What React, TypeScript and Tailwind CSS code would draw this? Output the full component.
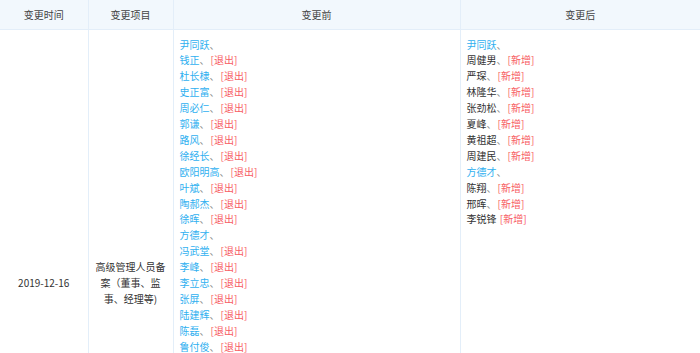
const BEFORE: { name: string; tag?: string }[] = [
  { name: "尹同跃" },
  { name: "钱正", tag: "退出" },
  { name: "杜长棣", tag: "退出" },
  { name: "史正富", tag: "退出" },
  { name: "周必仁", tag: "退出" },
  { name: "郭谦", tag: "退出" },
  { name: "路风", tag: "退出" },
  { name: "徐经长", tag: "退出" },
  { name: "欧阳明高", tag: "退出" },
  { name: "叶斌", tag: "退出" },
  { name: "陶郝杰", tag: "退出" },
  { name: "徐晖", tag: "退出" },
  { name: "方德才" },
  { name: "冯武堂", tag: "退出" },
  { name: "李峰", tag: "退出" },
  { name: "李立忠", tag: "退出" },
  { name: "张屏", tag: "退出" },
  { name: "陆建辉", tag: "退出" },
  { name: "陈磊", tag: "退出" },
  { name: "鲁付俊", tag: "退出" },
  { name: "高新华", tag: "退出" },
  { name: "王文胜", tag: "退出" },
  { name: "胡卫兵", tag: "退出" },
  { name: "杨辉", tag: "退出" },
  { name: "汪强", tag: "退出" },
  { name: "吴春", tag: "退出" },
  { name: "张林", tag: "退出" },
  { name: "刘明", tag: "退出" },
  { name: "孙勇", tag: "退出" },
  { name: "赵军", tag: "退出" },
  { name: "朱玲", tag: "退出" },
];

const AFTER: { name: string; link?: boolean; tag?: string }[] = [
  { name: "尹同跃", link: true },
  { name: "周健男", tag: "新增" },
  { name: "严琛", tag: "新增" },
  { name: "林隆华", tag: "新增" },
  { name: "张劲松", tag: "新增" },
  { name: "夏峰", tag: "新增" },
  { name: "黄祖超", tag: "新增" },
  { name: "周建民", tag: "新增" },
  { name: "方德才", link: true },
  { name: "陈翔", tag: "新增" },
  { name: "邢晖", tag: "新增" },
  { name: "李锐锋", tag: "新增" },
];

const font = { fontFamily: '"Noto Sans CJK SC", "Liberation Sans", sans-serif' };

export default function App() {
  return (
    <div className="h-[353px] w-[700px] overflow-hidden bg-white text-[10px] leading-[15.9px] text-[#333]" style={font}>
      <table className="w-[700px] table-fixed border-collapse">
        <colgroup>
          <col className="w-[88px]" />
          <col className="w-[85px]" />
          <col className="w-[287px]" />
          <col className="w-[240px]" />
        </colgroup>
        <thead>
          <tr className="h-[29px] bg-[#f2f8fd] text-[#444]">
            <th className="border-b border-r border-[#e3eef9] pt-px font-normal">变更时间</th>
            <th className="border-b border-r border-[#e3eef9] pt-px font-normal">变更项目</th>
            <th className="border-b border-r border-[#e3eef9] pt-px font-normal">变更前</th>
            <th className="border-b border-[#e3eef9] pt-px font-normal">变更后</th>
          </tr>
        </thead>
        <tbody>
          <tr>
            <td className="border-r border-[#e3eef9] px-1.5 text-center align-middle">2019-12-16</td>
            <td className="border-r border-[#e3eef9] px-1 text-center align-middle">
              高级管理人员备案（董事、监事、经理等)
            </td>
            <td className="border-r border-[#e3eef9] px-1.5 py-[7px] align-top">
              {BEFORE.map((b) => (
                <div key={b.name}>
                  <span className="text-[#2fb0f0]">{b.name}</span>
                  <span className="text-[#888]">、</span>
                  {b.tag && <span className="ml-px text-[#f75c63]">[{b.tag}]</span>}
                </div>
              ))}
            </td>
            <td className="px-1.5 py-[7px] align-top">
              {AFTER.map((a, i) => (
                <div key={a.name}>
                  <span className={a.link ? "text-[#2fb0f0]" : "text-[#333]"}>{a.name}</span>
                  {i < AFTER.length - 1 && <span className="text-[#888]">、</span>}
                  {i === AFTER.length - 1 && " "}
                  {a.tag && <span className="ml-px text-[#f75c63]">[{a.tag}]</span>}
                </div>
              ))}
            </td>
          </tr>
        </tbody>
      </table>
    </div>
  );
}
